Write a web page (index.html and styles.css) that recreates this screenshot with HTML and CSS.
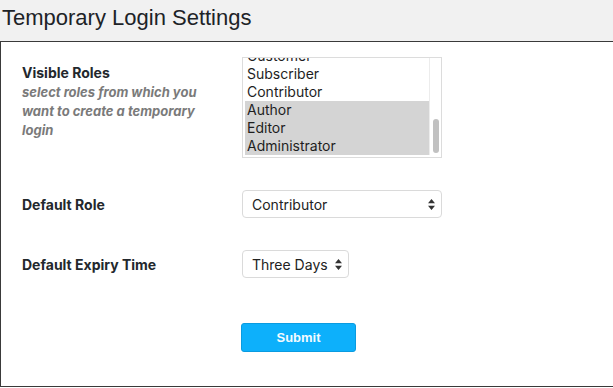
FILE: index.html
```html
<!DOCTYPE html>
<html lang="en">
<head>
<meta charset="utf-8">
<title>Temporary Login Settings</title>
<link rel="stylesheet" href="styles.css">
</head>
<body>
<header class="page-header">
  <h1 class="page-title">Temporary Login Settings</h1>
</header>
<main class="panel">
  <form class="settings-form">
    <div class="row">
      <div class="label-cell">
        <div class="label">Visible Roles</div>
        <div class="desc">select roles from which you want to create a temporary login</div>
      </div>
      <div class="field-cell first">
        <div class="listbox">
          <ul class="options">
            <li class="opt">Customer</li>
            <li class="opt">Subscriber</li>
            <li class="opt">Contributor</li>
            <li class="opt sel">Author</li>
            <li class="opt sel">Editor</li>
            <li class="opt sel">Administrator</li>
          </ul>
          <div class="scrolltrack"><div class="thumb"></div></div>
        </div>
      </div>
    </div>
    <div class="row">
      <div class="label-cell"><div class="label">Default Role</div></div>
      <div class="field-cell">
        <div class="select wide">
          <span class="select-text">Contributor</span>
          <svg class="arrows" width="7" height="11" viewBox="0 0 7 11"><path d="M3.5 0 L7 4.2 L0 4.2 Z M0 6.8 L7 6.8 L3.5 11 Z" fill="#333"/></svg>
        </div>
      </div>
    </div>
    <div class="row">
      <div class="label-cell"><div class="label">Default Expiry Time</div></div>
      <div class="field-cell">
        <div class="select narrow">
          <span class="select-text">Three Days</span>
          <svg class="arrows" width="7" height="11" viewBox="0 0 7 11"><path d="M3.5 0 L7 4.2 L0 4.2 Z M0 6.8 L7 6.8 L3.5 11 Z" fill="#333"/></svg>
        </div>
      </div>
    </div>
    <div class="row submit-row">
      <div class="label-cell"></div>
      <div class="field-cell submit-cell">
        <button type="button" class="submit">Submit</button>
      </div>
    </div>
  </form>
</main>
</body>
</html>
```
FILE: styles.css
```css
html, body {
  margin: 0;
  padding: 0;
  background: #ffffff;
}
body {
  width: 613px;
  height: 388px;
  overflow: hidden;
  font-family: "Inter", "Liberation Sans", sans-serif;
}
.page-header {
  height: 41px;
  background: #f1f1f1;
  box-sizing: border-box;
  padding: 5px 0 0 2px;
}
.page-title {
  margin: 0;
  font-family: "Liberation Sans", Arial, sans-serif;
  font-weight: normal;
  font-size: 22px;
  line-height: 26px;
  color: #1d2327;
}
.panel {
  display: block;
  box-sizing: border-box;
  height: 346px;
  width: 640px;
  border: 1px solid #3a3a3a;
  border-right: none;
  background: #fff;
}
.settings-form {
  display: flex;
  flex-direction: column;
}
.row {
  display: grid;
  grid-template-columns: 220px 1fr;
  padding-left: 21px;
}
.label-cell {
  padding: 21px 10px 19px 0;
}
.label {
  font-size: 14px;
  font-weight: 700;
  line-height: 19px;
  color: #23282d;
}
.desc {
  font-size: 13px;
  font-weight: 700;
  font-style: italic;
  line-height: 19px;
  color: #7a7a7a;
  width: 185px;
  margin-top: 1px;
}
.field-cell {
  padding: 15px 0;
}
.listbox {
  box-sizing: border-box;
  width: 200px;
  height: 101px;
  margin: 0 0 1px 0;
  border: 1px solid #dcdcdc;
  display: flex;
  overflow: hidden;
  padding: 0 0 2px 2px;
}
.options {
  list-style: none;
  margin: -11px 0 0 0;
  padding: 0;
  flex: 1;
}
.opt {
  height: 18px;
  line-height: 18px;
  font-size: 14px;
  color: #1e1e1e;
  padding-left: 2px;
}
.opt.sel {
  background: #d4d4d4;
}
.scrolltrack {
  width: 11px;
  border-left: 1px solid #ececec;
  display: flex;
  flex-direction: column;
  justify-content: flex-end;
  align-items: center;
  padding-bottom: 2px;
}
.thumb {
  width: 6px;
  height: 34px;
  border-radius: 3px;
  background: #c1c1c1;
}
.select {
  box-sizing: border-box;
  height: 28px;
  margin: 1px 0;
  border: 1px solid #dadada;
  border-radius: 4px;
  display: flex;
  align-items: center;
  justify-content: space-between;
  padding: 0 6px 0 9px;
  background: #fff;
  font-size: 14px;
  color: #222;
}
.select.wide { width: 200px; }
.select.narrow { width: 107px; }
.arrows { display: block; }
.submit-cell {
  padding-top: 29px;
}
.submit {
  box-sizing: border-box;
  width: 115px;
  height: 29px;
  margin-left: -1px;
  border: 1px solid #0a9be0;
  border-radius: 3px;
  background: #0db0fb;
  color: #f4fbff;
  font-family: "Liberation Sans", Arial, sans-serif;
  font-size: 13px;
  font-weight: 700;
  cursor: pointer;
  padding: 0;
}
```
